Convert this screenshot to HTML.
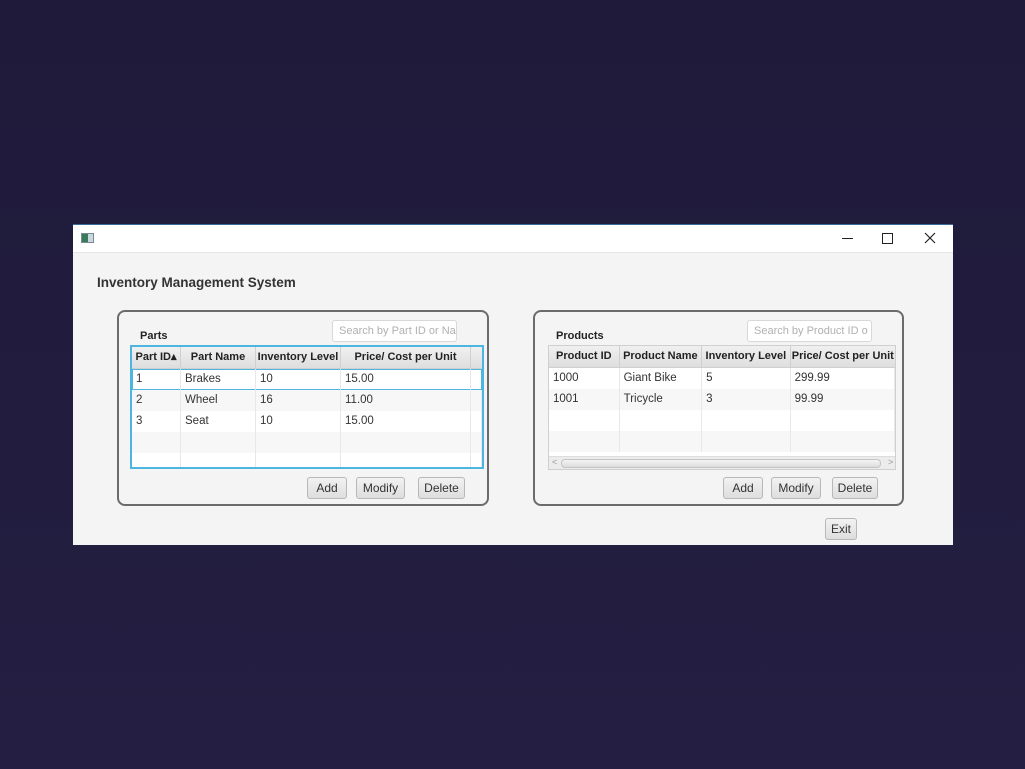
<!DOCTYPE html>
<html><head><style>
*{margin:0;padding:0;box-sizing:border-box}
body{width:1025px;height:769px;overflow:hidden;background:linear-gradient(#1f1a3a,#241f42);font-family:"Liberation Sans",sans-serif;position:relative}
.a{position:absolute}
.win{left:73px;top:224px;width:880px;height:321px;background:#f4f4f4;border-top:1px solid #3a6a9a}
.tb{left:0;top:0;width:880px;height:28px;background:#fff;border-bottom:1px solid #e6e6e6}
.panel{border:2px solid #6b6b6b;border-radius:8px;background:#f4f4f4}
.search{background:#fff;border:1px solid #d8d8d8;border-radius:3px;font-size:11px;color:#b0b0b0;padding:4px 6px;white-space:nowrap;overflow:hidden;height:22px}
.btn{background:linear-gradient(#f2f2f2,#dedede);border:1px solid #b8b8b8;border-radius:3px;font-size:12px;color:#333;text-align:center;line-height:20px;height:22px}
.hd{background:linear-gradient(#f0f0f0,#dedede);font-weight:bold;font-size:11px;color:#222;text-align:center;line-height:21px;border-right:1px solid #cfcfcf;border-bottom:1px solid #cfcfcf;height:22px;white-space:nowrap;overflow:hidden}
.c{font-size:11.5px;color:#333;line-height:21px;padding-left:4px;border-right:1px solid #e8e8e8;height:21px;white-space:nowrap}
</style></head><body>
<div class="a win">
 <div class="a tb">
  <div class="a" style="left:8px;top:8px;width:13px;height:10px;background:#c9d7e0;border:1px solid #7a8a95"><div style="width:6px;height:8px;background:#3a7a5a"></div></div>
  <div class="a" style="left:769px;top:13px;width:11px;height:1px;background:#222"></div>
  <div class="a" style="left:809px;top:8px;width:11px;height:11px;border:1.5px solid #222"></div>
  <svg class="a" style="left:851px;top:7px" width="12" height="12"><path d="M1 1L11 11M11 1L1 11" stroke="#222" stroke-width="1.2"/></svg>
 </div>
 <div class="a" style="left:24px;top:50px;font-size:13.5px;font-weight:bold;color:#333">Inventory Management System</div>
</div>

<div class="a panel" style="left:117px;top:310px;width:372px;height:196px"></div>
<div class="a" style="left:140px;top:330px;font-size:11px;font-weight:bold;color:#222">Parts</div>
<div class="a search" style="left:332px;top:320px;width:125px">Search by Part ID or Na</div>
<div class="a" style="left:130px;top:345px;width:354px;height:124px;background:#fff;border:2px solid #4cb6e0;overflow:hidden">
 <div style="display:flex"><div class="hd" style="width:49px">Part ID▴</div><div class="hd" style="width:75px">Part Name</div><div class="hd" style="width:85px">Inventory Level</div><div class="hd" style="width:130px">Price/ Cost per Unit</div><div class="hd" style="width:11px;border-right:0"></div></div>
 <div style="display:flex;background:#fff;box-shadow:inset 0 0 0 1px #4cb6e0"><div class="c" style="width:49px">1</div><div class="c" style="width:75px">Brakes</div><div class="c" style="width:85px">10</div><div class="c" style="width:130px">15.00</div><div class="c" style="width:11px;border-right:0"></div></div>
 <div style="display:flex;background:#f7f7f7"><div class="c" style="width:49px">2</div><div class="c" style="width:75px">Wheel</div><div class="c" style="width:85px">16</div><div class="c" style="width:130px">11.00</div><div class="c" style="width:11px"></div></div>
 <div style="display:flex;background:#fff"><div class="c" style="width:49px">3</div><div class="c" style="width:75px">Seat</div><div class="c" style="width:85px">10</div><div class="c" style="width:130px">15.00</div><div class="c" style="width:11px"></div></div>
 <div style="display:flex;background:#f7f7f7"><div class="c" style="width:49px"></div><div class="c" style="width:75px"></div><div class="c" style="width:85px"></div><div class="c" style="width:130px"></div><div class="c" style="width:11px"></div></div>
 <div style="display:flex;background:#fff"><div class="c" style="width:49px"></div><div class="c" style="width:75px"></div><div class="c" style="width:85px"></div><div class="c" style="width:130px"></div><div class="c" style="width:11px"></div></div>
</div>
<div class="a btn" style="left:307px;top:477px;width:40px">Add</div>
<div class="a btn" style="left:356px;top:477px;width:49px">Modify</div>
<div class="a btn" style="left:418px;top:477px;width:47px">Delete</div>

<div class="a panel" style="left:533px;top:310px;width:371px;height:196px"></div>
<div class="a" style="left:556px;top:330px;font-size:11px;font-weight:bold;color:#222">Products</div>
<div class="a search" style="left:747px;top:320px;width:125px">Search by Product ID o</div>
<div class="a" style="left:548px;top:345px;width:348px;height:125px;background:#fff;border:1px solid #cfcfcf;overflow:hidden">
 <div style="display:flex"><div class="hd" style="width:71px">Product ID</div><div class="hd" style="width:83px">Product Name</div><div class="hd" style="width:89px">Inventory Level</div><div class="hd" style="width:105px;border-right:0">Price/ Cost per Unit</div></div>
 <div style="display:flex;background:#fff"><div class="c" style="width:71px">1000</div><div class="c" style="width:83px">Giant Bike</div><div class="c" style="width:89px">5</div><div class="c" style="width:105px">299.99</div></div>
 <div style="display:flex;background:#f7f7f7"><div class="c" style="width:71px">1001</div><div class="c" style="width:83px">Tricycle</div><div class="c" style="width:89px">3</div><div class="c" style="width:105px">99.99</div></div>
 <div style="display:flex;background:#fff"><div class="c" style="width:71px"></div><div class="c" style="width:83px"></div><div class="c" style="width:89px"></div><div class="c" style="width:105px"></div></div>
 <div style="display:flex;background:#f7f7f7"><div class="c" style="width:71px"></div><div class="c" style="width:83px"></div><div class="c" style="width:89px"></div><div class="c" style="width:105px"></div></div>
 <div class="a" style="left:0;top:110px;width:348px;height:14px;background:#ececec;border-top:1px solid #ddd">
  <div class="a" style="left:3px;top:0;font-size:9px;color:#999">&lt;</div>
  <div class="a" style="left:12px;top:2px;width:320px;height:9px;background:linear-gradient(#f4f4f4,#dcdcdc);border:1px solid #c4c4c4;border-radius:4px"></div>
  <div class="a" style="left:339px;top:0;font-size:9px;color:#999">&gt;</div>
 </div>
</div>
<div class="a btn" style="left:723px;top:477px;width:40px">Add</div>
<div class="a btn" style="left:771px;top:477px;width:50px">Modify</div>
<div class="a btn" style="left:832px;top:477px;width:46px">Delete</div>
<div class="a btn" style="left:825px;top:518px;width:32px">Exit</div>
</body></html>
